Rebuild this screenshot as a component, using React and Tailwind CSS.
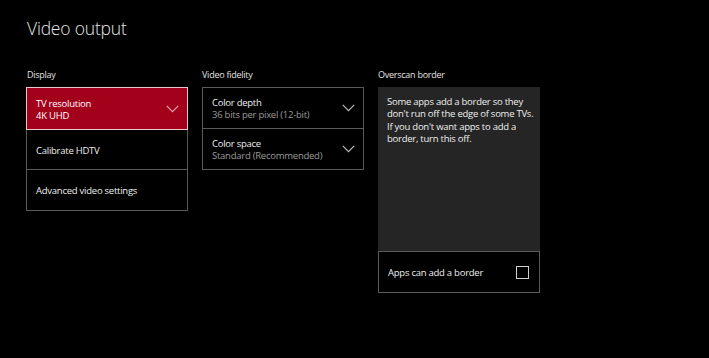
import React from "react";

const Chevron = ({ color }) => (
  <svg width="13" height="8" viewBox="0 0 13 8" fill="none">
    <path d="M0.8 0.8 L6.5 6.6 L12.2 0.8" stroke={color} strokeWidth="1.2" />
  </svg>
);

export default function App() {
  const font = { fontFamily: '"Open Sans", "Noto Sans", sans-serif' };
  return (
    <div className="w-[709px] h-[358px] bg-black text-white overflow-hidden pl-[26px] pt-[16px]" style={font}>
      <div className="text-[17.5px] leading-[24px] font-light text-[#e6e6e6] pl-px tracking-[-0.2px]">Video output</div>
      <div className="flex gap-[14px] mt-[29px] tracking-[-0.25px]">
        {/* Display */}
        <div className="w-[162px] flex flex-col">
          <div className="text-[9px] leading-[12px] text-[#e0e0e0] pl-px h-[18px]">Display</div>
          <div className="h-[43px] bg-[#a3001c] border border-[#e7c7cb] flex items-center justify-between pl-[9px] pr-[8px]">
            <div className="text-[9.5px] leading-[11.5px] text-white pt-[2px]">
              <div>TV resolution</div>
              <div>4K UHD</div>
            </div>
            <Chevron color="#f2a3ae" />
          </div>
          <div className="border border-t-0 border-[#5a5a5a]">
            <div className="h-[40px] flex items-center pl-[9px] pt-[3px] text-[9.5px] text-[#eeeeee] border-b border-[#5a5a5a]">Calibrate HDTV</div>
            <div className="h-[40px] flex items-center pl-[9px] pt-[2px] text-[9.5px] text-[#eeeeee]">Advanced video settings</div>
          </div>
        </div>
        {/* Video fidelity */}
        <div className="w-[162px] flex flex-col">
          <div className="text-[9px] leading-[12px] text-[#e0e0e0] h-[18px]">Video fidelity</div>
          <div className="border border-[#5a5a5a]">
            <div className="h-[41px] flex items-center justify-between pl-[9px] pr-[8px] border-b border-[#5a5a5a]">
              <div className="text-[9.5px] leading-[11.5px] pt-[1px]">
                <div className="text-[#eeeeee]">Color depth</div>
                <div className="text-[#9a9a9a]">36 bits per pixel (12-bit)</div>
              </div>
              <Chevron color="#bdbdbd" />
            </div>
            <div className="h-[40px] flex items-center justify-between pl-[9px] pr-[8px]">
              <div className="text-[9.5px] leading-[11.5px] pt-[1px]">
                <div className="text-[#eeeeee]">Color space</div>
                <div className="text-[#9a9a9a]">Standard (Recommended)</div>
              </div>
              <Chevron color="#bdbdbd" />
            </div>
          </div>
        </div>
        {/* Overscan */}
        <div className="w-[162px] flex flex-col">
          <div className="text-[9px] leading-[12px] text-[#e0e0e0] h-[18px]">Overscan border</div>
          <div className="h-[164px] bg-[#252525] pl-[9px] pr-[4px] pt-[9px] text-[9.5px] leading-[12.4px] text-[#eeeeee]">
            Some apps add a border so they don't run off the edge of some TVs. If you don't want apps to add a border, turn this off.
          </div>
          <div className="h-[42px] border border-[#5a5a5a] flex items-center justify-between pl-[9px] pr-[10px]">
            <span className="text-[9.5px] text-[#eeeeee] pt-[3px]">Apps can add a border</span>
            <div className="w-[13px] h-[13px] border-[1.5px] border-[#cfcfcf] mt-[1px]" />
          </div>
        </div>
      </div>
    </div>
  );
}
